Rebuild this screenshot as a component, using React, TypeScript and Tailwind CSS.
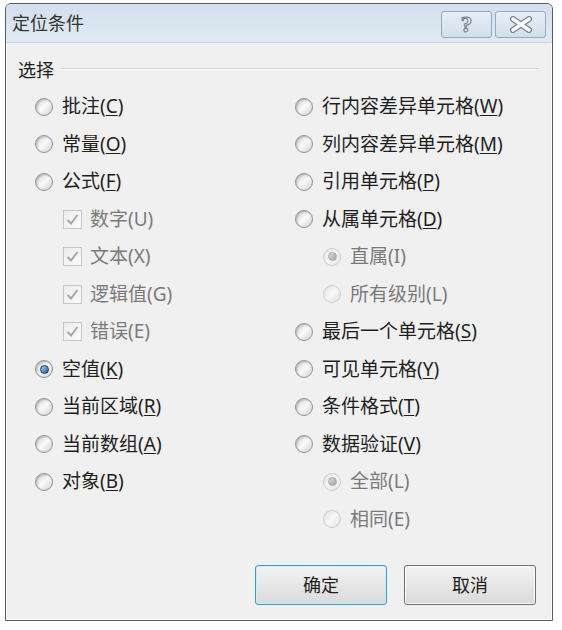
import React from 'react';

type Item = {
  label: string;
  key?: string;
  kind: 'radio' | 'check';
  checked?: boolean;
  disabled?: boolean;
  indent?: boolean;
};

const leftItems: (Item | null)[] = [
  { label: '批注', key: 'C', kind: 'radio' },
  { label: '常量', key: 'O', kind: 'radio' },
  { label: '公式', key: 'F', kind: 'radio' },
  { label: '数字(U)', kind: 'check', checked: true, disabled: true, indent: true },
  { label: '文本(X)', kind: 'check', checked: true, disabled: true, indent: true },
  { label: '逻辑值(G)', kind: 'check', checked: true, disabled: true, indent: true },
  { label: '错误(E)', kind: 'check', checked: true, disabled: true, indent: true },
  { label: '空值', key: 'K', kind: 'radio', checked: true },
  { label: '当前区域', key: 'R', kind: 'radio' },
  { label: '当前数组', key: 'A', kind: 'radio' },
  { label: '对象', key: 'B', kind: 'radio' },
  null,
];

const rightItems: Item[] = [
  { label: '行内容差异单元格', key: 'W', kind: 'radio' },
  { label: '列内容差异单元格', key: 'M', kind: 'radio' },
  { label: '引用单元格', key: 'P', kind: 'radio' },
  { label: '从属单元格', key: 'D', kind: 'radio' },
  { label: '直属(I)', kind: 'radio', checked: true, disabled: true, indent: true },
  { label: '所有级别(L)', kind: 'radio', disabled: true, indent: true },
  { label: '最后一个单元格', key: 'S', kind: 'radio' },
  { label: '可见单元格', key: 'Y', kind: 'radio' },
  { label: '条件格式', key: 'T', kind: 'radio' },
  { label: '数据验证', key: 'V', kind: 'radio' },
  { label: '全部(L)', kind: 'radio', checked: true, disabled: true, indent: true },
  { label: '相同(E)', kind: 'radio', disabled: true, indent: true },
];

function Radio({ checked, disabled }: { checked?: boolean; disabled?: boolean }) {
  return (
    <span
      className={
        'flex h-[18px] w-[18px] shrink-0 items-center justify-center rounded-full border ' +
        (disabled
          ? 'border-[#cdcdcd] bg-gradient-to-br from-[#e2e2e2] via-[#f6f6f6] to-[#e4e4e4]'
          : 'border-[#939393] bg-gradient-to-br from-[#d4d4d4] via-[#fafafa] to-[#d0d0d0] shadow-[inset_1px_1px_2px_#b5b5b5]')
      }
    >
      {checked && (
        <span
          className={
            'h-[9px] w-[9px] rounded-full ' +
            (disabled
              ? 'border border-[#a8a8a8] bg-gradient-to-br from-[#dedede] to-[#a4a4a4]'
              : 'border border-[#16395c] bg-gradient-to-br from-[#9fd6f5] to-[#1f5f9c]')
          }
        />
      )}
    </span>
  );
}

function Check({ checked }: { checked?: boolean }) {
  return (
    <span className="flex h-[19px] w-[19px] shrink-0 items-center justify-center border border-[#c6c6c6] bg-gradient-to-br from-[#ececec] to-[#fafafa]">
      {checked && (
        <svg width="15" height="15" viewBox="0 0 15 15">
          <path d="M2.5 8 L6 11.5 L12.5 3" fill="none" stroke="#a6a6a6" strokeWidth="2" />
        </svg>
      )}
    </span>
  );
}

function Row({ item }: { item: Item | null }) {
  if (!item) return <div className="h-[37.5px]" />;
  return (
    <div className={'flex h-[37.5px] items-center ' + (item.indent ? 'pl-[28px]' : '')}>
      {item.kind === 'radio' ? (
        <Radio checked={item.checked} disabled={item.disabled} />
      ) : (
        <Check checked={item.checked} />
      )}
      <span
        className={
          'whitespace-nowrap text-[19px] leading-none ' +
          (item.kind === 'check' ? 'ml-[8px] ' : 'ml-[9px] ') +
          (item.disabled ? 'text-[#7a7a7a]' : 'text-[#1e1e1e]')
        }
      >
        {item.label}
        {item.key && (
          <>
            (<span className="underline underline-offset-2">{item.key}</span>)
          </>
        )}
      </span>
    </div>
  );
}

export default function App() {
  return (
    <div
      className="h-[630px] w-[562px] bg-white pl-[5px] pt-[3px]"
      style={{ fontFamily: '"Noto Sans", "Noto Sans CJK SC", sans-serif' }}
    >
      <div className="flex h-[618px] w-[548px] flex-col rounded-t-[6px] border border-[#5b5b5b] bg-[#f0f0f0] shadow-[inset_0_0_0_1px_#ffffff]">
        {/* Title bar */}
        <div className="flex h-[38px] items-center justify-between rounded-t-[5px] bg-gradient-to-b from-[#d2dfed] to-[#e1eaf4] pl-[6px] pr-[6px]">
          <span className="text-[18px] text-[#333333]">定位条件</span>
          <div className="flex gap-[3px] pt-[2px]">
            <div className="flex h-[27px] w-[51px] items-center justify-center rounded-[3px] border border-[#94a8c0] bg-gradient-to-b from-[#e6eef7] to-[#d3dfec]">
              <span
                className="text-[23px] font-bold leading-none text-[#f6f6f6] [-webkit-text-stroke:1.2px_#7a8290]"
                style={{ fontFamily: '"Liberation Serif", serif' }}
              >
                ?
              </span>
            </div>
            <div className="flex h-[27px] w-[51px] items-center justify-center rounded-[3px] border border-[#94a8c0] bg-gradient-to-b from-[#e6eef7] to-[#d3dfec]">
              <svg width="24" height="17" viewBox="0 0 24 17">
                <path d="M4 3 L20 14 M20 3 L4 14" stroke="#79818e" strokeWidth="6" strokeLinecap="round" />
                <path d="M4 3 L20 14 M20 3 L4 14" stroke="#fafafa" strokeWidth="3.6" strokeLinecap="round" />
              </svg>
            </div>
          </div>
        </div>

        {/* Body */}
        <div className="flex flex-1 flex-col border-t border-[#c9d3de] px-[4px]">
          <div className="mt-[18px] flex items-center pl-[8px] pr-[9px]">
            <span className="text-[18px] leading-none text-[#1e1e1e]">选择</span>
            <div className="ml-[6px] mt-[-3px] h-[2px] flex-1 border-t border-b border-t-[#d5d5d5] border-b-white" />
          </div>

          <div className="mt-[9px] grid grid-cols-[260px_1fr] pl-[25px]">
            <div className="flex flex-col">
              {leftItems.map((it, i) => (
                <Row key={i} item={it} />
              ))}
            </div>
            <div className="flex flex-col">
              {rightItems.map((it, i) => (
                <Row key={i} item={it} />
              ))}
            </div>
          </div>

          <div className="mt-auto mb-[15px] flex justify-end gap-[17px] pr-[12px]">
            <button className="h-[40px] w-[132px] rounded-[3px] border border-[#3c9bd0] bg-gradient-to-b from-[#f3f3f3] to-[#dadada] text-[18px] text-[#1e1e1e] shadow-[inset_0_0_0_1px_#c8ecfb]">
              确定
            </button>
            <button className="h-[40px] w-[132px] rounded-[3px] border border-[#707070] bg-gradient-to-b from-[#f3f3f3] to-[#dadada] text-[18px] text-[#1e1e1e] shadow-[inset_0_0_0_1px_#fbfbfb]">
              取消
            </button>
          </div>
        </div>
      </div>
    </div>
  );
}
